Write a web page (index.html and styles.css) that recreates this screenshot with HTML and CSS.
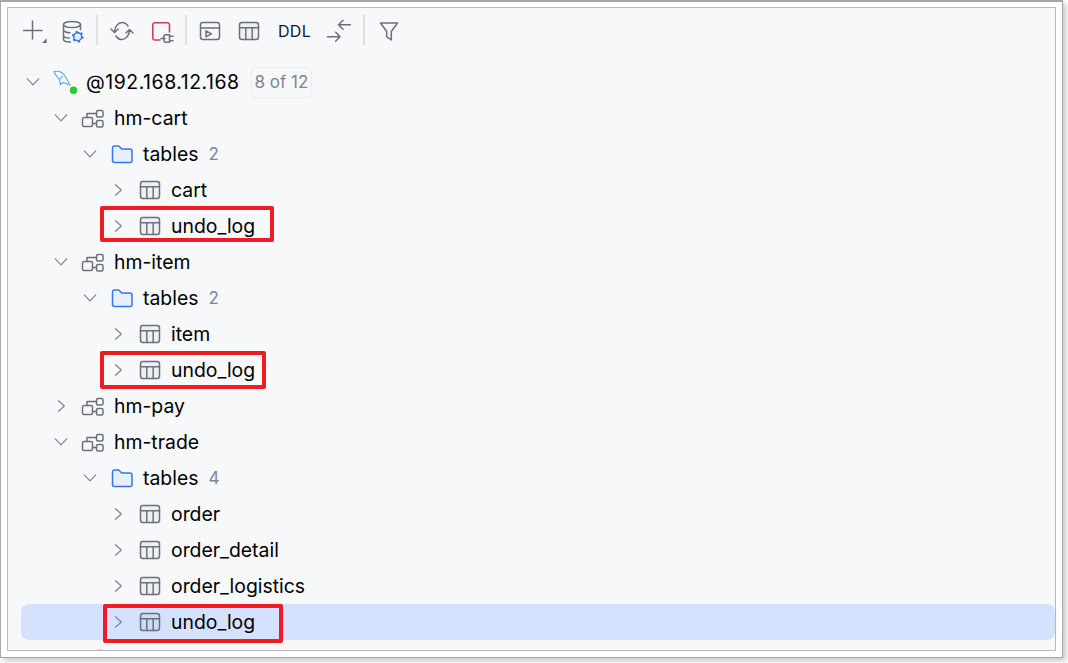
FILE: index.html
```html
<!DOCTYPE html>
<html lang="en">
<head>
<meta charset="utf-8">
<title>Database explorer</title>
<link rel="stylesheet" href="styles.css">
</head>
<body>
<svg class="defs" width="0" height="0" aria-hidden="true">
  <defs>
    <symbol id="i-table" viewBox="0 0 24 24">
      <rect class="ln tint" x="2.500" y="3.500" width="19" height="17" rx="2.500"/>
      <path class="ln" d="M2.500 8.700h19M8.800 8.700v11.800M15.200 8.700v11.800"/>
    </symbol>
    <symbol id="i-down" viewBox="0 0 16 16">
      <path class="chev" d="M2.300 4.800l5.700 6 5.700-6"/>
    </symbol>
    <symbol id="i-right" viewBox="0 0 16 16">
      <path class="chev" d="M5.500 2.700l5.800 5.300-5.800 5.300"/>
    </symbol>
    <symbol id="i-schema" viewBox="0 0 24 24">
      <rect class="ln" x="1.500" y="11.500" width="10" height="9" rx="1.500"/>
      <rect class="ln" x="15.500" y="4.500" width="6.500" height="6.500" rx="1.500"/>
      <rect class="ln" x="15.500" y="14.500" width="6.500" height="6.500" rx="1.500"/>
      <path class="ln" d="M6 11.500V7.500h9.500M11.500 17.500h4"/>
    </symbol>
    <symbol id="i-folder" viewBox="0 0 24 24">
      <path class="folder" d="M2.500 6a2 2 0 0 1 2-2h4.200l3 3H20a2 2 0 0 1 2 2v9.500a2 2 0 0 1-2 2H4.500a2 2 0 0 1-2-2z"/>
    </symbol>
  </defs>
</svg>
<div class="shot">
  <div class="panel">
    <div class="toolbar">
      <div class="group g15">
        <svg class="ico" viewBox="0 0 24 24"><path class="ln" d="M9.500 2v18M0 11.500h19"/><path class="solid" d="M23.700 19.300v5h-5z"/></svg>
        <svg class="ico" viewBox="0 0 24 24">
          <ellipse class="ln" cx="10" cy="5.500" rx="8.500" ry="3"/>
          <path class="ln" d="M1.500 5.500v15c0 1.500 3.500 2.500 7 2.500M1.500 11c0 1.500 3.500 2.800 6.500 2.800M1.500 16.500c0 1.500 3 2.500 6 2.500M18.500 5.500v5"/>
          <circle class="gear" cx="15.700" cy="17.700" r="4"/>
          <circle class="gear-dash" cx="15.700" cy="17.700" r="5.200"/>
        </svg>
      </div>
      <div class="sep sep-a"></div>
      <div class="group g16">
        <svg class="ico" viewBox="0 0 24 24"><path class="ln" d="M4.500 13C4.500 8 8 3.500 12 3.500c2.500 0 4.500 1 6 3.500M1 10l3.500 3.500L8 10M19.500 11c0 5-3.500 9.500-7.500 9.500-2.500 0-4.500-1-6-3.500M16 14l3.500-3.500L23 14"/></svg>
        <svg class="ico" viewBox="0 0 24 24"><path class="red" d="M10 21H5a2 2 0 0 1-2.200-2V6a2 2 0 0 1 2-2.200H17.500A2 2 0 0 1 19.500 6v7"/><path class="ln" d="M11 19.500h4M23 17.300H20M23 21.700H20"/><path class="ln" d="M15.500 15.800h4v7.400h-4c-1 0-1.800-1-1.800-3.700s.8-3.700 1.800-3.700z"/></svg>
      </div>
      <div class="sep sep-b"></div>
      <div class="group">
        <svg class="ico" viewBox="0 0 24 24"><rect class="ln" x="2.500" y="3.500" width="19" height="17" rx="2.500"/><path class="ln" d="M2.500 9h19M8 11.800l5.500 3-5.500 3z"/></svg>
        <svg class="ico m15" viewBox="0 0 24 24"><use href="#i-table"/></svg>
        <span class="ddl">DDL</span>
        <svg class="ico m16" viewBox="0 0 24 24"><path class="ln" d="M23.500 5.700H11.500M16 1.200L11.500 5.700 16 10.200M.5 17.700H13M8.700 13.200L13 17.700 8.700 22.200"/></svg>
      </div>
      <div class="sep sep-c"></div>
      <svg class="ico" viewBox="0 0 24 24"><path class="ln" d="M3.500 4h17L14.300 12.500V21l-4.600-3.200v-5.300z"/></svg>
    </div>
    <div class="tree">
      <div class="row lvl0">
        <svg class="chevron"><use href="#i-down"/></svg>
        <svg class="ico" viewBox="0 0 24 24">
          <path class="sea" d="M1 1.500C5 .7 9 2 11.200 5c2.300 3.200 4 6.300 6 10.500M1 1.500c.8 3 3.500 5.200 5 7.800 1 1.800 1 3.700 1.500 5.700.8-2 1.800-2.800 3.500-2.300 1.600.5 3 1.300 5 1.800M6 9.300c1.500-.6 2.600-1.600 3.300-3"/>
          <circle class="dot" cx="20.500" cy="20.300" r="3.500"/>
        </svg>
        <span class="label host">@192.168.12.168</span>
        <span class="badge">8 of 12</span>
      </div>

      <div class="row lvl1"><svg class="chevron"><use href="#i-down"/></svg><svg class="ico"><use href="#i-schema"/></svg><span class="label">hm-cart</span></div>
      <div class="row lvl2"><svg class="chevron"><use href="#i-down"/></svg><svg class="ico"><use href="#i-folder"/></svg><span class="label">tables</span><span class="count">2</span></div>
      <div class="row lvl3"><svg class="chevron"><use href="#i-right"/></svg><svg class="ico"><use href="#i-table"/></svg><span class="label">cart</span></div>
      <div class="row lvl3"><svg class="chevron"><use href="#i-right"/></svg><svg class="ico"><use href="#i-table"/></svg><span class="label">undo_log</span><span class="mark mark-cart"></span></div>

      <div class="row lvl1"><svg class="chevron"><use href="#i-down"/></svg><svg class="ico"><use href="#i-schema"/></svg><span class="label">hm-item</span></div>
      <div class="row lvl2"><svg class="chevron"><use href="#i-down"/></svg><svg class="ico"><use href="#i-folder"/></svg><span class="label">tables</span><span class="count">2</span></div>
      <div class="row lvl3"><svg class="chevron"><use href="#i-right"/></svg><svg class="ico"><use href="#i-table"/></svg><span class="label">item</span></div>
      <div class="row lvl3"><svg class="chevron"><use href="#i-right"/></svg><svg class="ico"><use href="#i-table"/></svg><span class="label">undo_log</span><span class="mark mark-item"></span></div>

      <div class="row lvl1"><svg class="chevron"><use href="#i-right"/></svg><svg class="ico"><use href="#i-schema"/></svg><span class="label">hm-pay</span></div>

      <div class="row lvl1"><svg class="chevron"><use href="#i-down"/></svg><svg class="ico"><use href="#i-schema"/></svg><span class="label">hm-trade</span></div>
      <div class="row lvl2"><svg class="chevron"><use href="#i-down"/></svg><svg class="ico"><use href="#i-folder"/></svg><span class="label">tables</span><span class="count">4</span></div>
      <div class="row lvl3"><svg class="chevron"><use href="#i-right"/></svg><svg class="ico"><use href="#i-table"/></svg><span class="label">order</span></div>
      <div class="row lvl3"><svg class="chevron"><use href="#i-right"/></svg><svg class="ico"><use href="#i-table"/></svg><span class="label">order_detail</span></div>
      <div class="row lvl3"><svg class="chevron"><use href="#i-right"/></svg><svg class="ico"><use href="#i-table"/></svg><span class="label">order_logistics</span></div>
      <div class="row lvl3 selected"><svg class="chevron"><use href="#i-right"/></svg><svg class="ico"><use href="#i-table"/></svg><span class="label">undo_log</span><span class="mark mark-trade"></span></div>

      <div class="row lvl1"><span class="chevron"></span><svg class="ico"><use href="#i-schema"/></svg></div>
    </div>
  </div>
</div>
</body>
</html>
```

FILE: styles.css
```css
* { box-sizing: border-box; }

html, body {
  margin: 0;
  height: 100%;
  background: #fff;
  overflow: hidden;
}

body {
  font-family: Inter, "Liberation Sans", sans-serif;
  color: #000;
}

.defs { position: absolute; }

.shot {
  width: 1063px;
  height: 658px;
  padding: 5px 6px 6px;
  background: #fff;
  border: 1px solid #a8a8a8;
  border-top-width: 2px;
  box-shadow: 3px 3px 6px rgba(0, 0, 0, 0.22);
}

.panel {
  height: 100%;
  background: #f7f8fa;
  border: 1px solid #b9b9b9;
  overflow: hidden;
}

.toolbar {
  display: flex;
  align-items: center;
  height: 30px;
  margin-top: 8px;
  padding-left: 15px;
}

.group { display: flex; align-items: center; }
.g15 { gap: 15px; }
.g16 { gap: 16px; }
.m15 { margin-left: 15px; }
.m16 { margin-left: 16px; }

.sep {
  flex: none;
  width: 2px;
  height: 30px;
  margin-top: -2px;
  background: #dfe1e5;
}

.sep-a { margin-left: 10px; margin-right: 12px; }
.sep-b { margin-left: 11px; margin-right: 11px; }
.sep-c { margin-left: 12px; margin-right: 12px; }

.ico {
  flex: none;
  width: 24px;
  height: 24px;
}

.ln, .chev, .red, .sea, .folder {
  fill: none;
  stroke-width: 1.500;
  stroke-linecap: round;
  stroke-linejoin: round;
}

.ln { stroke: #6c707e; }
.tint { fill: rgba(108, 112, 126, 0.06); }
.chev { stroke: #7f8390; stroke-width: 1.200; }
.red { stroke: #db3b4b; stroke-width: 1.600; }
.sea { stroke: #58a9d4; stroke-width: 1.100; }
.solid { fill: #6c707e; }
.dot { fill: #1fd61f; stroke: #1a9c3a; stroke-width: 0.500; }
.gear { fill: #e7effd; stroke: #3574f0; stroke-width: 1.500; }
.gear-dash { fill: none; stroke: #3574f0; stroke-width: 1.500; stroke-dasharray: 2.200 3.250; }
.folder { fill: #e7effd; stroke: #3574f0; }

.ddl {
  margin-left: 17px;
  width: 33px;
  font-size: 16px;
  color: #0a1a33;
  letter-spacing: 0.300px;
}

.tree {
  margin-top: 18px;
  margin-left: 13px;
}

.row {
  position: relative;
  display: flex;
  align-items: center;
  height: 36px;
  font-size: 19.400px;
  white-space: nowrap;
  border-radius: 8px;
}

.lvl0 { padding-left: 4px; }
.lvl1 { padding-left: 32px; }
.lvl2 { padding-left: 61px; }
.lvl3 { padding-left: 89px; }

.selected { background: #d4e2ff; }

.chevron {
  flex: none;
  width: 16px;
  height: 16px;
  margin-right: 12px;
}

.label { margin-left: 9px; }
.host { letter-spacing: 0.550px; }

.count {
  margin-left: 10px;
  font-size: 17px;
  color: #818594;
}

.badge {
  margin-left: 11px;
  padding: 0 3px;
  height: 31px;
  line-height: 29px;
  font-size: 17px;
  color: #818594;
  border: 1px solid #ebecf0;
  border-radius: 5px;
}

.mark {
  position: absolute;
  border: 4px solid #ee1c25;
  border-radius: 2px;
}

.mark-cart { left: 79px; top: -2px; width: 174px; height: 36px; }
.mark-item { left: 79px; top: -1px; width: 166px; height: 38px; }
.mark-trade { left: 82px; top: 0; width: 180px; height: 39px; }
```
